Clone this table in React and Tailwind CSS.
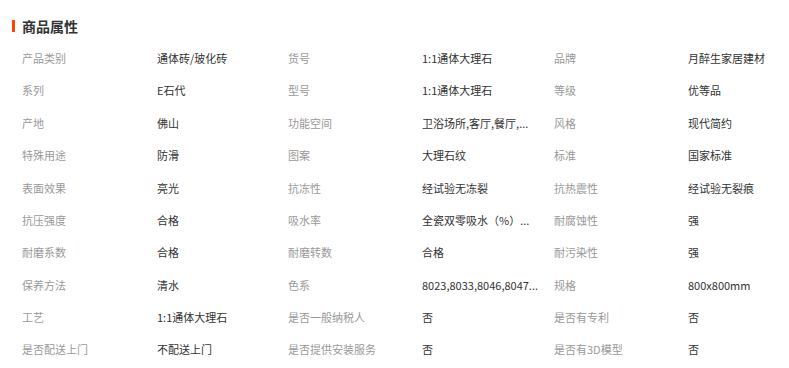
const attrs = [
  ['产品类别', '通体砖/玻化砖', '货号', '1:1通体大理石', '品牌', '月醉生家居建材'],
  ['系列', 'E石代', '型号', '1:1通体大理石', '等级', '优等品'],
  ['产地', '佛山', '功能空间', '卫浴场所,客厅,餐厅,...', '风格', '现代简约'],
  ['特殊用途', '防滑', '图案', '大理石纹', '标准', '国家标准'],
  ['表面效果', '亮光', '抗冻性', '经试验无冻裂', '抗热震性', '经试验无裂痕'],
  ['抗压强度', '合格', '吸水率', '全瓷双零吸水（%）...', '耐腐蚀性', '强'],
  ['耐磨系数', '合格', '耐磨转数', '合格', '耐污染性', '强'],
  ['保养方法', '清水', '色系', '8023,8033,8046,8047...', '规格', '800x800mm'],
  ['工艺', '1:1通体大理石', '是否一般纳税人', '否', '是否有专利', '否'],
  ['是否配送上门', '不配送上门', '是否提供安装服务', '否', '是否有3D模型', '否'],
]

export default function App() {
  return (
    <div
      className="w-[789px] h-[368px] bg-white overflow-hidden"
      style={{ fontFamily: '"Noto Sans CJK SC", "Noto Sans", sans-serif' }}
    >
      <div className="flex items-center h-5 mt-4 pl-3">
        <span className="w-[3px] h-3 bg-[#ff4400]" />
        <h2 className="ml-[7px] text-[14px] font-bold text-[#333]">商品属性</h2>
      </div>

      <div className="mt-[6px] pl-[22px]">
        {attrs.map((row, i) => (
          <div
            key={i}
            className="grid grid-cols-[135px_131px_134px_132px_134px_1fr] h-[32.4px] items-center text-[11px] whitespace-nowrap"
          >
            {row.map((cell, j) => (
              <span key={j} className={j % 2 === 0 ? 'text-[#999]' : 'text-[#333]'}>
                {cell}
              </span>
            ))}
          </div>
        ))}
      </div>
    </div>
  )
}
